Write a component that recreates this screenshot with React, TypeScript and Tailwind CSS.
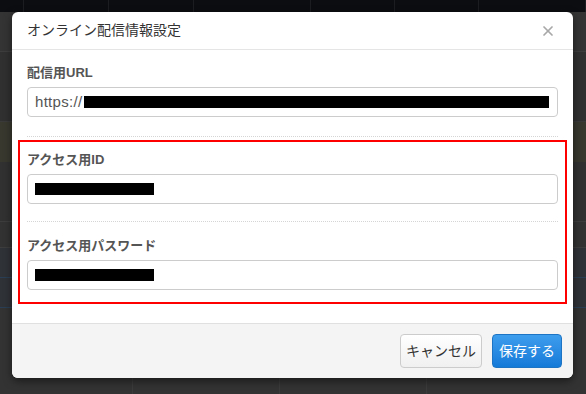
import { X } from "lucide-react";

const FONT = "font-['Liberation_Sans','Noto_Sans_CJK_JP',sans-serif]";

function Field({ label, value, bar }: { label: string; value?: string; bar: string }) {
  return (
    <div>
      <div className="h-[18px] text-[13px] leading-[18px] font-bold text-[#555]">{label}</div>
      <div className="mt-[5px] flex h-[30px] items-center rounded-[4px] border border-[#ccc] bg-white px-[7px] text-[15px] text-[#555]">
        {value && <span className="tracking-[0.3px]">{value}</span>}
        <span className={`h-[12px] bg-black ${bar}`} />
      </div>
    </div>
  );
}

function Backdrop() {
  const cols = ["w-[24px]", "w-[85px]", "w-[85px]", "w-[117px]", "w-[84px]", "w-[84px]", "flex-1"];
  return (
    <div className="flex h-[394px] flex-col bg-[#333]">
      <div className="flex h-[12px] bg-[#0b0d10]">
        {cols.map((c, i) => (
          <div key={i} className={`${c} border-r border-[#1b1d20]`} />
        ))}
      </div>
      <div className="h-[40px] border-b border-[#3d3d3d] bg-[#343434]" />
      <div className="h-[70px] border-b border-[#3a3a3a] bg-[#303030]" />
      <div className="h-[40px] bg-[#38382f]" />
      <div className="h-[60px] border-b border-[#3d3d3d] bg-[#313131]" />
      <div className="h-[26px] border-b border-[#3d3d3d] bg-[#323232]" />
      <div className="h-[30px] border-b border-[#2a3f55] bg-[#2f3237]" />
      <div className="h-[30px] border-b border-[#2a3f55] bg-[#2f3237]" />
      <div className="flex flex-1 bg-[#333]">
        <div className="w-[133px] border-r border-[#3b3b3b]" />
        <div className="w-[147px] border-r border-[#3b3b3b]" />
        <div className="w-[147px] border-r border-[#3b3b3b]" />
        <div className="flex-1" />
      </div>
    </div>
  );
}

export default function App() {
  return (
    <div className={`relative h-[394px] w-[586px] overflow-hidden ${FONT}`}>
      <Backdrop />

      <div className="absolute left-[12px] top-[12px] w-[561px] overflow-hidden rounded-[6px] bg-white shadow-[0_3px_9px_rgba(0,0,0,0.5)]">
        <div className="flex h-[38px] items-center justify-between border-b border-[#e5e5e5] pl-[15px] pr-[17px]">
          <h4 className="text-[14px] text-[#333]">オンライン配信情報設定</h4>
          <X size={16} strokeWidth={2.6} className="text-[#a8a8a8]" />
        </div>

        <div className="px-[15px] pb-[19px] pt-[14px]">
          <Field label="配信用URL" value="https://" bar="ml-[2px] w-[465px]" />
          <div className="mt-[19px] border-t border-dotted border-[#d5d5d5]" />

          <div className="mx-[-9px] mt-[3px] border-2 border-[#f00] px-[7px] pb-[12px] pt-[9px]">
            <Field label="アクセス用ID" bar="w-[119px]" />
            <div className="mt-[17px] border-t border-dotted border-[#d5d5d5]" />
            <div className="mt-[15px]">
              <Field label="アクセス用パスワード" bar="w-[119px]" />
            </div>
          </div>
        </div>

        <div className="flex h-[55px] items-start justify-end gap-[10px] border-t border-[#e0e0e0] bg-[#f4f4f4] pr-[11px] pt-[10px]">
          <button className="h-[34px] w-[82px] rounded-[4px] border border-[#ccc] bg-gradient-to-b from-white to-[#f0f0f0] text-[14px] text-[#333]">
            キャンセル
          </button>
          <button className="h-[34px] w-[70px] rounded-[4px] border border-[#1d74c4] bg-gradient-to-b from-[#3d9ded] to-[#137ad8] text-[14px] text-white">
            保存する
          </button>
        </div>
      </div>
    </div>
  );
}
